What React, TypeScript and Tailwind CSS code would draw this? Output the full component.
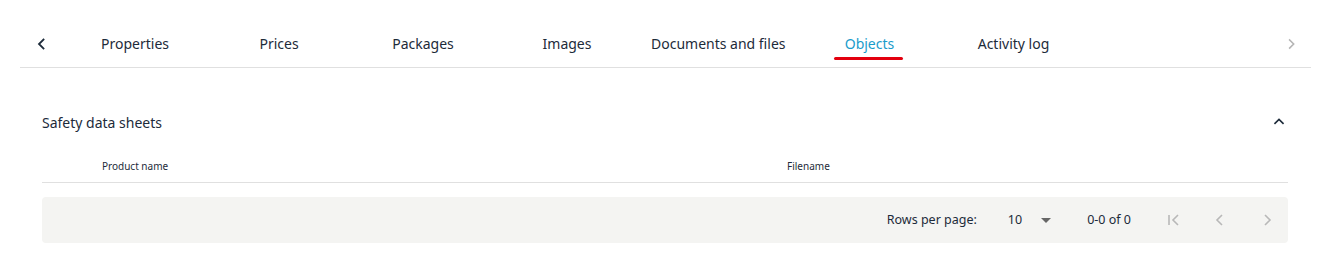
import React from "react";

const tabs = [
  "Properties",
  "Prices",
  "Packages",
  "Images",
  "Documents and files",
  "Objects",
  "Activity log",
];

const Chevron = ({ dir, className }: { dir: "left" | "right" | "up"; className?: string }) => {
  const d =
    dir === "left" ? "M14 6l-6 6 6 6" : dir === "right" ? "M10 6l6 6-6 6" : "M6 14l6-6 6 6";
  return (
    <svg viewBox="0 0 24 24" className={className} fill="none" stroke="currentColor" strokeWidth={2.4} strokeLinecap="square">
      <path d={d} />
    </svg>
  );
};

const TabBar = ({ active }: { active: string }) => {
  return (
    <div className="ml-5 mr-[6px] flex h-12 items-stretch border-b border-[#e0e0e0]">
      <button className="flex w-[43px] items-center justify-center text-[#1d2b3a]">
        <Chevron dir="left" className="h-[18px] w-[18px]" />
      </button>
      <div className="flex flex-1">
        {tabs.map((t) => (
          <div
            key={t}
            className={`flex min-w-[144px] items-center justify-center px-3 text-[14px] ${
              t === active ? "text-[#1a9ccb]" : "text-[#1d2b3a]"
            }`}
          >
            <span className="relative">
              {t}
              {t === active && (
                <span className="absolute -bottom-[6px] -left-[11px] -right-[9px] h-[3px] rounded-full bg-[#e3000f]" />
              )}
            </span>
          </div>
        ))}
      </div>
      <button className="flex w-[40px] items-center justify-center text-[#b5b5b5]">
        <Chevron dir="right" className="h-[16px] w-[16px]" />
      </button>
    </div>
  );
};

export default function App() {
  return (
    <div className="h-[267px] w-full bg-white pt-5" style={{ fontFamily: '"Noto Sans", "Open Sans", sans-serif' }}>
      <TabBar active="Objects" />

      <div className="mx-[42px] mt-[42px] w-[1246px]">
        <div className="flex h-6 items-center justify-between">
          <h2 className="text-[14px] text-[#1d2b3a]">Safety data sheets</h2>
          <Chevron dir="up" className="mr-[1px] h-[16px] w-[16px] text-[#1d2b3a]" />
        </div>

        <div className="mt-[21px] flex h-[28px] items-center border-b border-[#e0e0e0] pb-[4px] text-[10px] text-[#1d2b3a]">
          <div className="w-[745px] pl-[60px]">Product name</div>
          <div>Filename</div>
        </div>

        <div className="mt-[14px] flex h-[46px] items-center justify-end rounded bg-[#f4f4f2] pr-[9px] text-[12.5px] text-[#1d2b3a]">
          <span>Rows per page:</span>
          <span className="ml-[31px]">10</span>
          <svg viewBox="0 0 10 5" className="ml-[19px] h-[5px] w-[10px] text-[#666]" fill="currentColor">
            <path d="M0 0h10L5 5z" />
          </svg>
          <span className="ml-[36px]">0-0 of 0</span>
          <div className="ml-[30px] flex items-center gap-[23px] text-[#b8b8b8]">
            <svg viewBox="0 0 24 24" className="h-[24px] w-[24px]" fill="none" stroke="currentColor" strokeWidth={1.6}>
              <path d="M8 7v10M17 7l-5 5 5 5" />
            </svg>
            <svg viewBox="0 0 24 24" className="h-[24px] w-[24px]" fill="none" stroke="currentColor" strokeWidth={1.6}>
              <path d="M14 7l-5 5 5 5" />
            </svg>
            <svg viewBox="0 0 24 24" className="h-[24px] w-[24px]" fill="none" stroke="currentColor" strokeWidth={1.6}>
              <path d="M10 7l5 5-5 5" />
            </svg>
          </div>
        </div>
      </div>
    </div>
  );
}
